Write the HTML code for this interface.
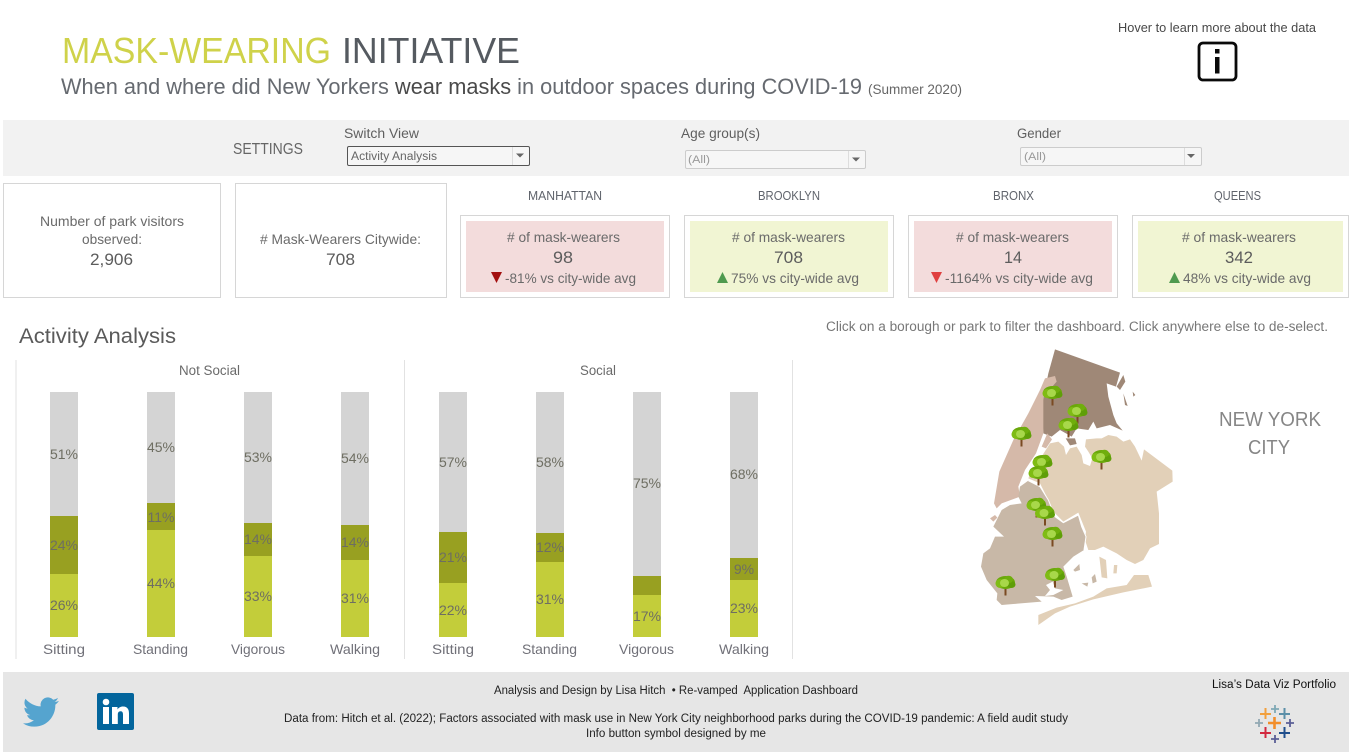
<!DOCTYPE html>
<html><head><meta charset="utf-8"><title>Mask-Wearing Initiative</title>
<style>
html,body{margin:0;padding:0;background:#fff;width:1359px;height:756px;overflow:hidden}
svg{display:block}
text{font-family:"Liberation Sans",sans-serif;fill:#6a6a6a;white-space:pre}
.p text{font-size:14px;text-anchor:middle;fill:#6e6e62}
.x text{font-size:14px;fill:#707078}
.h text{font-size:12.5px;fill:#60646c}
.k{font-size:14px}
.v{font-size:17px;fill:#5c5c5c}
.f text{font-size:11.5px;fill:#222}
</style></head><body>
<svg width="1359" height="756" viewBox="0 0 1359 756" xmlns="http://www.w3.org/2000/svg">
<defs>
<g id="t">
<rect x="-1" y="2" width="2" height="12.500" fill="#7a4a22"/>
<ellipse cx="0" cy="1.500" rx="9.500" ry="6.500" fill="#6aa80a"/>
<ellipse cx="-5.500" cy="2.500" rx="4.500" ry="4.500" fill="#7fbc14"/>
<ellipse cx="6" cy="3.500" rx="4" ry="3.500" fill="#5f9e08"/>
<ellipse cx="3" cy="-1.500" rx="4.500" ry="3.800" fill="#6fae0c"/>
<ellipse cx="-1" cy="2" rx="4.500" ry="4" fill="#a8d84a"/>
</g>
</defs>
<rect width="1359" height="756" fill="#fff"/>

<!-- header -->
<text lengthAdjust="spacingAndGlyphs" x="62" y="63" font-size="36" textLength="269" style="fill:#cfd24a">MASK-WEARING</text>
<text lengthAdjust="spacingAndGlyphs" x="342" y="63" font-size="36" textLength="178" style="fill:#555a60">INITIATIVE</text>
<text lengthAdjust="spacingAndGlyphs" x="61" y="94" font-size="22" textLength="801" style="fill:#666a70">When and where did New Yorkers <tspan style="fill:#4a4a4a">wear masks</tspan> in outdoor spaces during COVID-19</text>
<text lengthAdjust="spacingAndGlyphs" x="868" y="94" font-size="13.500" textLength="94" style="fill:#666">(Summer 2020)</text>
<text lengthAdjust="spacingAndGlyphs" x="1118" y="32" font-size="13" textLength="198" style="fill:#484848">Hover to learn more about the data</text>
<rect x="1199" y="43" width="37" height="37" rx="4" fill="#fff" stroke="#0a0a0a" stroke-width="2.800"/>
<rect x="1215" y="49" width="4.500" height="4.500" fill="#0a0a0a"/>
<rect x="1215" y="57" width="4.500" height="16.500" fill="#0a0a0a"/>

<!-- settings -->
<rect x="3" y="120" width="1346" height="56" fill="#f2f2f2"/>
<text lengthAdjust="spacingAndGlyphs" x="233" y="154" font-size="15.500" textLength="70" style="fill:#666">SETTINGS</text>
<text lengthAdjust="spacingAndGlyphs" x="344" y="138" font-size="13.500" textLength="75" style="fill:#5f5f5f">Switch View</text>
<rect x="347.500" y="146.500" width="182" height="19" rx="1.500" fill="#f6f6f6" stroke="#555"/>
<line x1="512.500" y1="147" x2="512.500" y2="165" stroke="#ddd"/>
<path d="M516 153.500h8l-4 4z" fill="#666"/>
<text lengthAdjust="spacingAndGlyphs" x="351" y="160" font-size="11.500" textLength="86" style="fill:#666">Activity Analysis</text>
<text lengthAdjust="spacingAndGlyphs" x="681" y="138" font-size="13.500" textLength="79" style="fill:#5f5f5f">Age group(s)</text>
<rect x="685.500" y="150.500" width="180" height="18" rx="1.500" fill="#f6f6f6" stroke="#ccc"/>
<line x1="848.500" y1="151" x2="848.500" y2="168" stroke="#ddd"/>
<path d="M852 157.500h8l-4 4z" fill="#666"/>
<text lengthAdjust="spacingAndGlyphs" x="688" y="163" font-size="11" textLength="22" style="fill:#999">(All)</text>
<text lengthAdjust="spacingAndGlyphs" x="1017" y="138" font-size="13.500" textLength="44" style="fill:#5f5f5f">Gender</text>
<rect x="1020.500" y="147.500" width="181" height="18" rx="1.500" fill="#f6f6f6" stroke="#ccc"/>
<line x1="1184.500" y1="148" x2="1184.500" y2="165" stroke="#ddd"/>
<path d="M1187 154h8l-4 4z" fill="#666"/>
<text lengthAdjust="spacingAndGlyphs" x="1024" y="160" font-size="11" textLength="22" style="fill:#999">(All)</text>

<!-- KPI -->
<rect x="3.500" y="183.500" width="217" height="114" fill="#fff" stroke="#d6d6d6"/>
<rect x="235.500" y="183.500" width="211" height="114" fill="#fff" stroke="#d6d6d6"/>
<text lengthAdjust="spacingAndGlyphs" class="k" x="40" y="226" textLength="144">Number of park visitors</text>
<text lengthAdjust="spacingAndGlyphs" class="k" x="82" y="244" textLength="60">observed:</text>
<text lengthAdjust="spacingAndGlyphs" class="v" x="90" y="265" textLength="43">2,906</text>
<text lengthAdjust="spacingAndGlyphs" class="k" x="260" y="244" textLength="161"># Mask-Wearers Citywide:</text>
<text lengthAdjust="spacingAndGlyphs" class="v" x="326" y="265" textLength="29">708</text>

<g class="h">
<text lengthAdjust="spacingAndGlyphs" x="528" y="200" textLength="74">MANHATTAN</text>
<text lengthAdjust="spacingAndGlyphs" x="758" y="200" textLength="62">BROOKLYN</text>
<text lengthAdjust="spacingAndGlyphs" x="993" y="200" textLength="41">BRONX</text>
<text lengthAdjust="spacingAndGlyphs" x="1214" y="200" textLength="47">QUEENS</text>
</g>

<rect x="460.500" y="215.500" width="209" height="82" fill="#fff" stroke="#d6d6d6"/>
<rect x="466" y="221" width="198" height="71" fill="#f3dcdc"/>
<rect x="684.500" y="215.500" width="209" height="82" fill="#fff" stroke="#d6d6d6"/>
<rect x="690" y="221" width="198" height="71" fill="#f1f5d3"/>
<rect x="908.500" y="215.500" width="209" height="82" fill="#fff" stroke="#d6d6d6"/>
<rect x="914" y="221" width="198" height="71" fill="#f3dcdc"/>
<rect x="1132.500" y="215.500" width="216" height="82" fill="#fff" stroke="#d6d6d6"/>
<rect x="1138" y="221" width="205" height="71" fill="#f1f5d3"/>

<text lengthAdjust="spacingAndGlyphs" class="k" x="507" y="242" textLength="113">&#35; of mask-wearers</text>
<text lengthAdjust="spacingAndGlyphs" class="v" x="553" y="263" textLength="20">98</text>
<path d="M491 272h11l-5.500 11z" fill="#a30f0f"/>
<text lengthAdjust="spacingAndGlyphs" class="k" x="505" y="283" textLength="131">-81% vs city-wide avg</text>

<text lengthAdjust="spacingAndGlyphs" class="k" x="732" y="242" textLength="113">&#35; of mask-wearers</text>
<text lengthAdjust="spacingAndGlyphs" class="v" x="774" y="263" textLength="29">708</text>
<path d="M717 283h11l-5.500-11z" fill="#4f9a4f"/>
<text lengthAdjust="spacingAndGlyphs" class="k" x="731" y="283" textLength="128">75% vs city-wide avg</text>

<text lengthAdjust="spacingAndGlyphs" class="k" x="956" y="242" textLength="113">&#35; of mask-wearers</text>
<text lengthAdjust="spacingAndGlyphs" class="v" x="1004" y="263" textLength="18">14</text>
<path d="M931 272h11l-5.500 11z" fill="#e04040"/>
<text lengthAdjust="spacingAndGlyphs" class="k" x="945" y="283" textLength="148">-1164% vs city-wide avg</text>

<text lengthAdjust="spacingAndGlyphs" class="k" x="1182" y="242" textLength="114">&#35; of mask-wearers</text>
<text lengthAdjust="spacingAndGlyphs" class="v" x="1225" y="263" textLength="28">342</text>
<path d="M1169 283h11l-5.500-11z" fill="#4f9a4f"/>
<text lengthAdjust="spacingAndGlyphs" class="k" x="1183" y="283" textLength="128">48% vs city-wide avg</text>

<!-- Chart -->
<text lengthAdjust="spacingAndGlyphs" x="19" y="343" font-size="21.500" textLength="157" style="fill:#5a5a5a">Activity Analysis</text>
<text lengthAdjust="spacingAndGlyphs" x="826" y="331" font-size="13.500" textLength="502" style="fill:#777">Click on a borough or park to filter the dashboard. Click anywhere else to de-select.</text>
<line x1="16" y1="360" x2="16" y2="659" stroke="#e2e2e2"/>
<line x1="404.500" y1="360" x2="404.500" y2="659" stroke="#e2e2e2"/>
<line x1="792.500" y1="360" x2="792.500" y2="659" stroke="#e2e2e2"/>
<text lengthAdjust="spacingAndGlyphs" x="179" y="375" font-size="13.500" textLength="61">Not Social</text>
<text lengthAdjust="spacingAndGlyphs" x="580" y="375" font-size="13.500" textLength="36">Social</text>

<g fill="#d4d4d4">
<rect x="50" y="392" width="28" height="124"/><rect x="147" y="392" width="28" height="111"/><rect x="244" y="392" width="28" height="131"/><rect x="341" y="392" width="28" height="133"/>
<rect x="439" y="392" width="28" height="140"/><rect x="536" y="392" width="28" height="141"/><rect x="633" y="392" width="28" height="184"/><rect x="730" y="392" width="28" height="166"/>
</g>
<g fill="#98a021">
<rect x="50" y="516" width="28" height="58"/><rect x="147" y="503" width="28" height="27"/><rect x="244" y="523" width="28" height="33"/><rect x="341" y="525" width="28" height="35"/>
<rect x="439" y="532" width="28" height="51"/><rect x="536" y="533" width="28" height="29"/><rect x="633" y="576" width="28" height="19"/><rect x="730" y="558" width="28" height="22"/>
</g>
<g fill="#c3cd3a">
<rect x="50" y="574" width="28" height="63"/><rect x="147" y="530" width="28" height="107"/><rect x="244" y="556" width="28" height="81"/><rect x="341" y="560" width="28" height="77"/>
<rect x="439" y="583" width="28" height="54"/><rect x="536" y="562" width="28" height="75"/><rect x="633" y="595" width="28" height="42"/><rect x="730" y="580" width="28" height="57"/>
</g>
<g class="p">
<text x="64" y="459">51%</text><text x="64" y="550">24%</text><text x="64" y="610">26%</text>
<text x="161" y="452">45%</text><text x="161" y="522">11%</text><text x="161" y="588">44%</text>
<text x="258" y="462">53%</text><text x="258" y="544">14%</text><text x="258" y="601">33%</text>
<text x="355" y="463">54%</text><text x="355" y="547">14%</text><text x="355" y="603">31%</text>
<text x="453" y="467">57%</text><text x="453" y="562">21%</text><text x="453" y="615">22%</text>
<text x="550" y="467">58%</text><text x="550" y="552">12%</text><text x="550" y="604">31%</text>
<text x="647" y="488">75%</text><text x="647" y="621">17%</text>
<text x="744" y="479">68%</text><text x="744" y="574">9%</text><text x="744" y="613">23%</text>
</g>
<g class="x">
<text lengthAdjust="spacingAndGlyphs" x="43" y="654" textLength="42">Sitting</text><text lengthAdjust="spacingAndGlyphs" x="133" y="654" textLength="55">Standing</text><text lengthAdjust="spacingAndGlyphs" x="231" y="654" textLength="54">Vigorous</text><text lengthAdjust="spacingAndGlyphs" x="330" y="654" textLength="50">Walking</text>
<text lengthAdjust="spacingAndGlyphs" x="432" y="654" textLength="42">Sitting</text><text lengthAdjust="spacingAndGlyphs" x="522" y="654" textLength="55">Standing</text><text lengthAdjust="spacingAndGlyphs" x="619" y="654" textLength="55">Vigorous</text><text lengthAdjust="spacingAndGlyphs" x="719" y="654" textLength="50">Walking</text>
</g>

<!-- Map -->
<g transform="translate(960 340) scale(.33333)">
<path fill="#9f8877" d="M285 28L480 98 468 140 440 130 445 170 460 225 470 250 488 272 450 255 410 265 400 245 385 270 350 265 335 290 300 270 275 290 250 280 245 200 265 100Z"/>
<path fill="#9f8877" d="M490 105L496 125 480 150 470 140ZM490 160L503 198 495 195ZM317 295L345 295 350 312 330 316ZM518 155L526 165 520 170Z"/>
<path fill="#d5b9a9" d="M255 115L285 108 290 125 250 170 250 280 228 340 195 390 175 440 180 470 125 490 110 505 102 490 118 395 160 300 205 220 240 150Z"/>
<path fill="#d5b9a9" d="M245 320L262 280 276 298 258 325Z"/>
<path fill="#e2d0b8" d="M270 310L295 305 312 320 318 345 330 325 350 320 365 345 370 370 390 378 397 355 385 335 375 320 378 298 410 295 425 295 445 285 470 290 490 305 510 298 525 320 545 362 552 328 637 392 638 425 590 455 597 520 597 612 570 625 550 660 525 672 500 660 470 640 430 620 405 630 385 630 375 600 378 575 355 518 310 545 280 515 260 470 240 430 205 415 215 390 235 365Z"/>
<path fill="#e2d0b8" d="M235 855L235 825 290 803 345 790 400 770 440 745 500 735 522 705 565 705 576 740 490 757 400 778 330 800 285 820Z"/>
<path fill="#e2d0b8" d="M418 650L438 660 442 715 425 712ZM462 675L472 675 470 700 460 700Z"/>
<path fill="#c8b8a7" d="M340 690L358 672 360 690 345 695ZM365 730L385 728 382 740ZM395 712L405 702 410 725 398 730ZM205 422L240 440 265 480 285 530 310 548 355 525 365 560 378 590 372 630 340 650 310 680 320 710 338 770 305 780 280 770 225 768 245 785 160 792 125 795 110 780 112 760 80 720 63 680 70 640 90 625 105 590 132 590 100 560 125 510 150 495 185 490 175 470 180 440Z"/>
<path fill="#d5b9a9" d="M90 535L105 525 112 533 100 545Z"/>
<path fill="#fff" d="M258 735L278 725 285 745 310 750 280 765 255 768 270 750Z"/>
<path fill="none" stroke="#fff" stroke-width="3" d="M205 422L240 440 265 480 285 530 310 548 355 525 365 560 378 590 372 630"/>
</g>
<use href="#t" x="1052.500" y="391"/>
<use href="#t" x="1077.500" y="409"/>
<use href="#t" x="1068.500" y="423"/>
<use href="#t" x="1021.500" y="432"/>
<use href="#t" x="1042.500" y="460"/>
<use href="#t" x="1038.500" y="471"/>
<use href="#t" x="1101.500" y="455"/>
<use href="#t" x="1036.500" y="503"/>
<use href="#t" x="1045" y="511"/>
<use href="#t" x="1052.500" y="532"/>
<use href="#t" x="1055" y="573"/>
<use href="#t" x="1005.500" y="581"/>
<text lengthAdjust="spacingAndGlyphs" x="1219" y="426" font-size="20.500" textLength="102" style="fill:#868686">NEW YORK</text>
<text lengthAdjust="spacingAndGlyphs" x="1248" y="454" font-size="20.500" textLength="42" style="fill:#868686">CITY</text>

<!-- Footer -->
<rect x="3" y="672" width="1346" height="80" fill="#e6e6e6"/>
<path transform="translate(23 694) scale(1.5)" fill="#55a4cf" d="M23.953 4.57a10 10 0 01-2.825.775 4.958 4.958 0 002.163-2.723c-.951.555-2.005.959-3.127 1.184a4.92 4.92 0 00-8.384 4.482C7.69 8.095 4.067 6.13 1.64 3.162a4.822 4.822 0 00-.666 2.475c0 1.71.87 3.213 2.188 4.096a4.904 4.904 0 01-2.228-.616v.06a4.923 4.923 0 003.946 4.827 4.996 4.996 0 01-2.212.085 4.936 4.936 0 004.604 3.417 9.867 9.867 0 01-6.102 2.105c-.39 0-.779-.023-1.17-.067a13.995 13.995 0 007.557 2.209c9.053 0 13.998-7.496 13.998-13.985 0-.21 0-.42-.015-.63A9.935 9.935 0 0024 4.59z"/>
<rect x="97" y="693" width="37" height="37" rx="2" fill="#03659c"/>
<circle cx="106" cy="702" r="3.300" fill="#fff"/>
<rect x="103" y="707" width="6" height="17" fill="#fff"/>
<path fill="#fff" d="M112 707h5.500v2.500c1-1.800 3-3 5.500-3 4.500 0 6 3 6 7V724h-6v-9.500c0-2-.7-3.300-2.400-3.300-2 0-2.800 1.400-2.800 3.300V724H112z"/>
<g class="f">
<text lengthAdjust="spacingAndGlyphs" x="494" y="694" textLength="364">Analysis and Design by Lisa Hitch  • Re-vamped  Application Dashboard</text>
<text lengthAdjust="spacingAndGlyphs" x="284" y="722" textLength="784">Data from: Hitch et al. (2022); Factors associated with mask use in New York City neighborhood parks during the COVID-19 pandemic: A field audit study</text>
<text lengthAdjust="spacingAndGlyphs" x="586" y="737" textLength="180">Info button symbol designed by me</text>
<text lengthAdjust="spacingAndGlyphs" x="1212" y="688" textLength="124" style="fill:#111">Lisa’s Data Viz Portfolio</text>
</g>
<g fill="none">
<path d="M1268 723h13M1274.500 717v12" stroke="#f28e2b" stroke-width="2.600"/>
<path d="M1260 714h11M1265.500 708v11" stroke="#f2a03d" stroke-width="2"/>
<path d="M1271 709h8M1275 705v8" stroke="#7fa9b5" stroke-width="1.800"/>
<path d="M1279 714h11M1284.500 708v11" stroke="#5b8fa8" stroke-width="2"/>
<path d="M1255 723h8M1259 719v8" stroke="#92a8b3" stroke-width="1.800"/>
<path d="M1286 723h8M1290 719v8" stroke="#5b5f97" stroke-width="1.800"/>
<path d="M1260 733h11M1265.500 727v11" stroke="#d2293f" stroke-width="2"/>
<path d="M1279 733h11M1284.500 727v11" stroke="#1f4e8c" stroke-width="2"/>
<path d="M1271 739h8M1275 735v8" stroke="#5b5f97" stroke-width="1.800"/>
</g>
</svg>
</body></html>
